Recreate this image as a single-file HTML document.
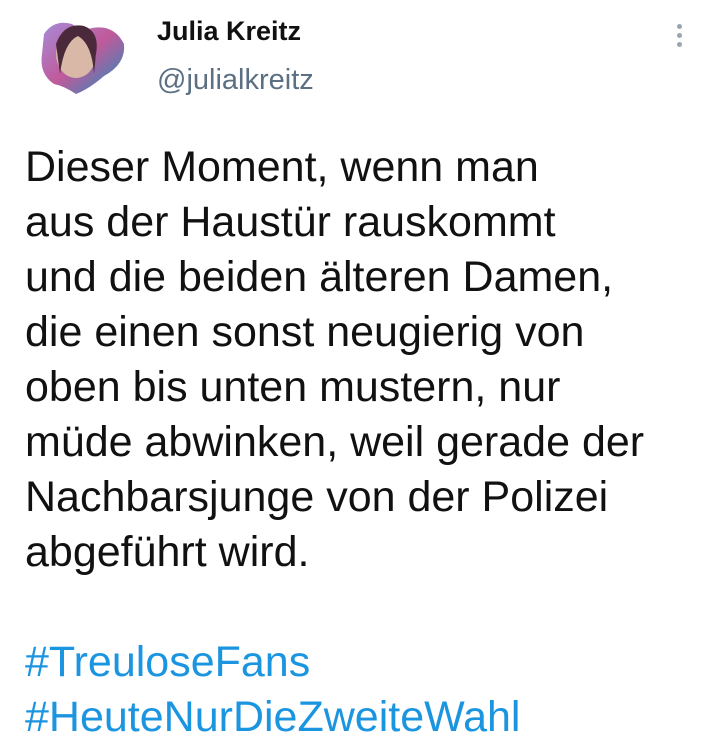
<!DOCTYPE html>
<html><head><meta charset="utf-8"><style>
body{margin:0;width:720px;height:752px;background:#fff;overflow:hidden;font-family:"Liberation Sans",sans-serif;position:relative}
.av{position:absolute;left:34px;top:14px;width:96px;height:84px}
.name{position:absolute;left:157px;top:16px;font-size:27px;font-weight:bold;color:#111}
.handle{position:absolute;left:157px;top:64px;font-size:29px;color:#5b7083}
.dots{position:absolute;left:677px;top:24px}
.dots i{display:block;width:5px;height:5px;border-radius:50%;background:#9aa5b1;margin-bottom:4px}
.txt{position:absolute;left:25px;top:140px;font-size:43px;line-height:55px;color:#111;white-space:pre}
.tag{color:#1b95e0}
</style></head><body>
<svg class="av" viewBox="0 0 96 84">
<defs><linearGradient id="g" x1="0" y1="0" x2="1" y2="1"><stop offset="0" stop-color="#a68bd8"/><stop offset=".5" stop-color="#c05a9a"/><stop offset="1" stop-color="#1c8fc0"/></linearGradient></defs>
<path d="M10 20 Q20 5 38 10 Q48 18 58 14 Q80 10 90 30 Q92 50 70 62 Q55 75 42 80 Q30 72 20 70 Q5 60 8 40 Z" fill="url(#g)"/>
<ellipse cx="42" cy="40" rx="20" ry="24" fill="#d9b8a8"/>
<path d="M22 30 Q30 8 50 12 Q66 18 62 40 L60 60 Q58 30 44 22 Q30 28 26 60 Z" fill="#4a2a3a"/>
</svg>
<div class="name">Julia Kreitz</div>
<div class="handle">@julialkreitz</div>
<div class="dots"><i></i><i></i><i></i></div>
<div class="txt">Dieser Moment, wenn man
aus der Haustür rauskommt
und die beiden älteren Damen,
die einen sonst neugierig von
oben bis unten mustern, nur
müde abwinken, weil gerade der
Nachbarsjunge von der Polizei
abgeführt wird.

<span class="tag">#TreuloseFans</span>
<span class="tag">#HeuteNurDieZweiteWahl</span></div>
</body></html>
